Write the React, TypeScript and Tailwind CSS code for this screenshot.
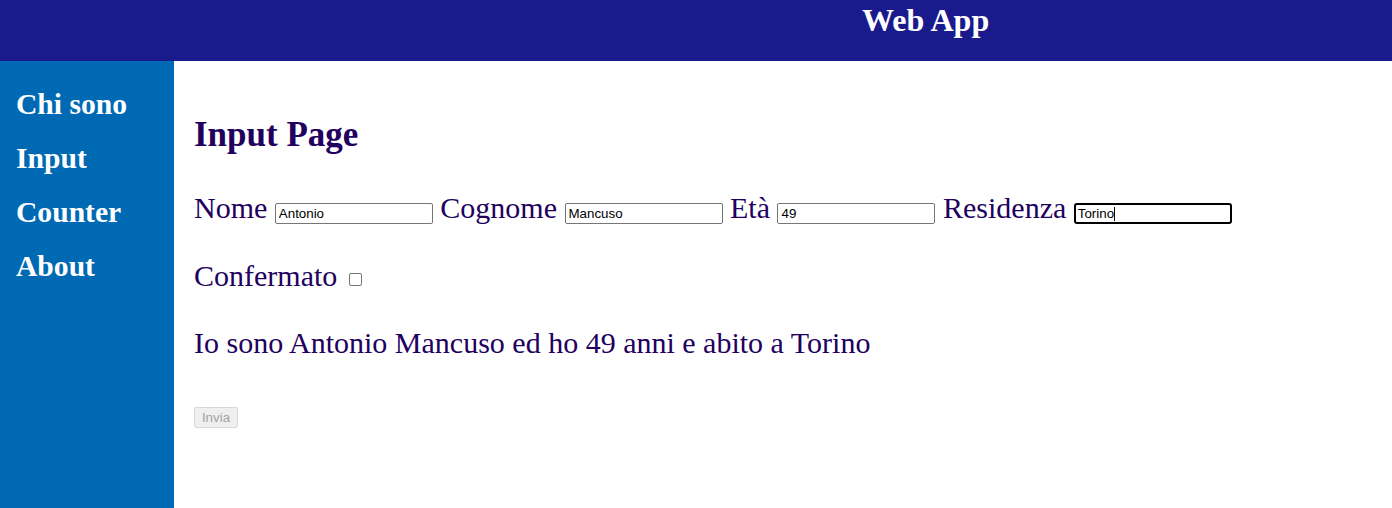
import React from "react";

const sans = { fontFamily: '"Liberation Sans", Arial, sans-serif' };

function Field({ value }: { value: string }) {
  return (
    <input
      readOnly
      value={value}
      className="inline-block w-[158px] h-[21px] border border-[#767676] rounded-[2px] px-[3px] text-[13.33px] leading-[15px] text-black align-baseline"
      style={sans}
    />
  );
}

export default function App() {
  const serif = { fontFamily: '"Liberation Serif", "Times New Roman", serif' };
  return (
    <div className="min-h-[508px] flex flex-col bg-white" style={serif}>
      <header className="h-[61px] bg-[#191a8b] flex items-start pl-[862px]">
        <h1 className="text-white font-bold text-[32px] leading-[36px] mt-[2px]">Web App</h1>
      </header>
      <div className="flex flex-1">
        <nav className="w-[174px] min-h-[447px] bg-[#0069b4] pt-[16px] pl-[16px]">
          {["Chi sono", "Input", "Counter", "About"].map((t) => (
            <div key={t} className="text-white font-bold text-[29.6px] leading-[54px]">
              {t}
            </div>
          ))}
        </nav>
        <main className="flex-1 pl-[20px] text-[#22005e]">
          <h2 className="font-bold text-[35px] leading-[40px] mt-[54px]">Input Page</h2>
          <p className="mt-[36px] h-[34px] text-[30px] leading-[34px] whitespace-nowrap">
            Nome <Field value="Antonio" /> Cognome <Field value="Mancuso" /> Età{" "}
            <Field value="49" /> Residenza{" "}
            <span
              className="inline-flex items-center w-[158px] h-[21px] border-2 border-black rounded-[3px] px-[2px] text-[13.33px] leading-[15px] text-black align-baseline"
              style={sans}
            >
              <span>Torino</span>
              <span className="w-px h-[14px] bg-black" />
            </span>
          </p>
          <p className="mt-[34px] h-[34px] text-[30px] leading-[34px]">
            Confermato{" "}
            <span className="inline-block w-[13px] h-[13px] border border-[#767676] rounded-[2px] ml-[4px] mr-[3px] align-baseline" />
          </p>
          <p className="mt-[33px] text-[30px] leading-[34px]">
            Io sono Antonio Mancuso ed ho 49 anni e abito a Torino
          </p>
          <button
            disabled
            className="mt-[47px] w-[44px] h-[21px] border border-[#d8d8d8] bg-[#efefef] rounded-[2px] text-[13.33px] leading-[15px] text-[#a4a4a4] flex items-center justify-center"
            style={sans}
          >
            Invia
          </button>
        </main>
      </div>
    </div>
  );
}
